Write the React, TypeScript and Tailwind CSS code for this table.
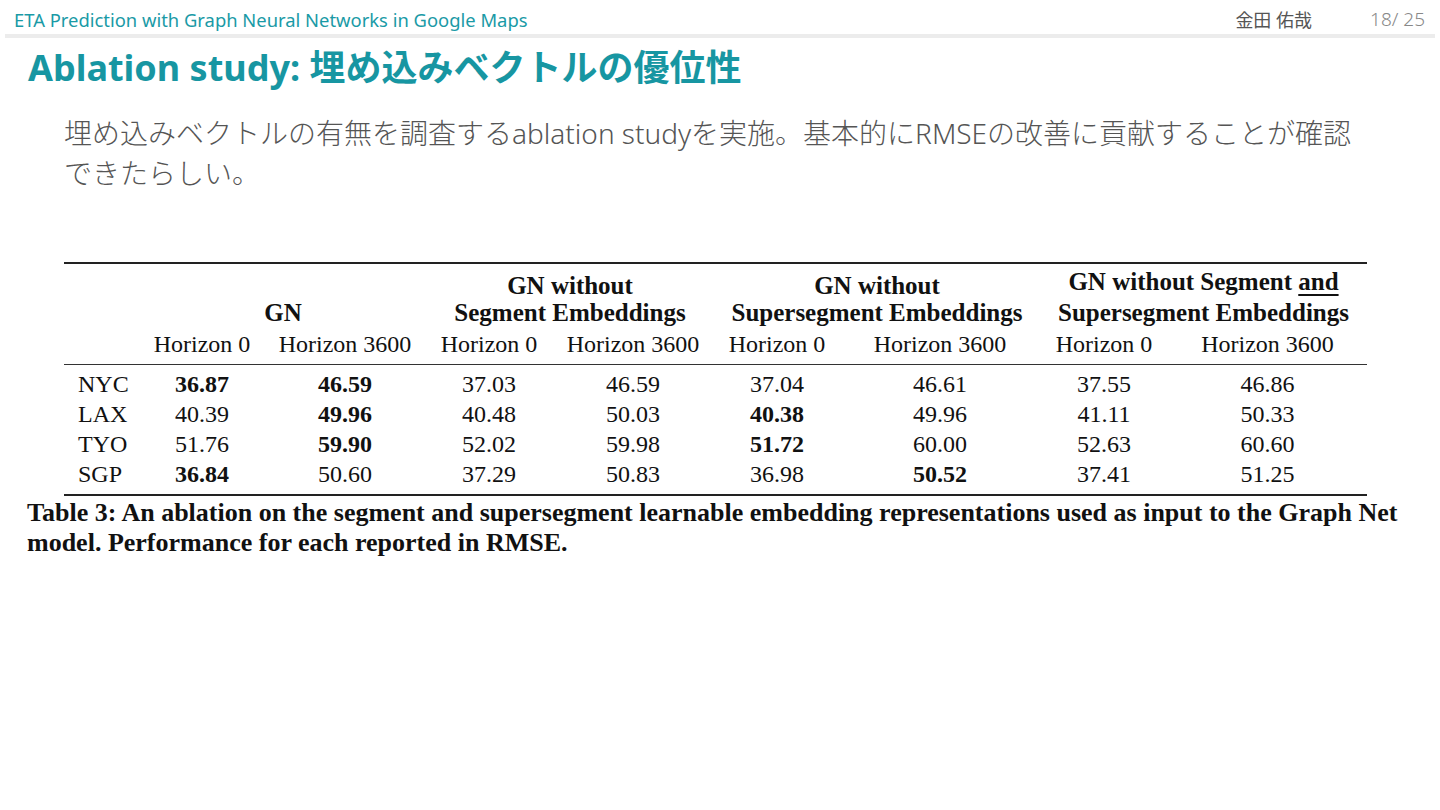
const groups = [
  { lines: ['GN'], span: 'col-span-2' },
  { lines: ['GN without', 'Segment Embeddings'], span: 'col-span-2' },
  { lines: ['GN without', 'Supersegment Embeddings'], span: 'col-span-2' },
  { lines: ['GN without Segment and', 'Supersegment Embeddings'], span: 'col-span-2', underline: true },
]

type Cell = { v: string; b?: boolean }
const rows: { city: string; cells: Cell[] }[] = [
  { city: 'NYC', cells: [{ v: '36.87', b: true }, { v: '46.59', b: true }, { v: '37.03' }, { v: '46.59' }, { v: '37.04' }, { v: '46.61' }, { v: '37.55' }, { v: '46.86' }] },
  { city: 'LAX', cells: [{ v: '40.39' }, { v: '49.96', b: true }, { v: '40.48' }, { v: '50.03' }, { v: '40.38', b: true }, { v: '49.96' }, { v: '41.11' }, { v: '50.33' }] },
  { city: 'TYO', cells: [{ v: '51.76' }, { v: '59.90', b: true }, { v: '52.02' }, { v: '59.98' }, { v: '51.72', b: true }, { v: '60.00' }, { v: '52.63' }, { v: '60.60' }] },
  { city: 'SGP', cells: [{ v: '36.84', b: true }, { v: '50.60' }, { v: '37.29' }, { v: '50.83' }, { v: '36.98' }, { v: '50.52', b: true }, { v: '37.41' }, { v: '51.25' }] },
]

const cols = 'grid grid-cols-[76px_124px_162px_126px_162px_126px_200px_128px_199px]'

export default function App() {
  return (
    <div className="w-[1440px] h-[810px] bg-white overflow-hidden font-['Noto_Sans','Noto_Sans_CJK_JP',sans-serif]">
      {/* top bar */}
      <div className="flex items-end h-[34px] pl-[14px] pr-[15px] pb-[5px]">
        <div className="text-[18.4px] text-[#1a9aa6] leading-none">ETA Prediction with Graph Neural Networks in Google Maps</div>
        <div className="ml-auto text-[18px] text-[#555] leading-none">金田 佑哉</div>
        <div className="ml-[58px] text-[19px] font-light text-[#888] leading-none">18/ 25</div>
      </div>
      <div className="mx-[5px] h-[4px] bg-[#ececec]" />

      <h1 className="pl-[28px] mt-[8px] text-[36px] font-bold leading-[44px] text-[#1796a2]">Ablation study: 埋め込みベクトルの優位性</h1>

      <p className="pl-[64px] pr-[70px] mt-[23px] text-[28px] leading-[40px] font-light text-[#555]">
        埋め込みベクトルの有無を調査するablation studyを実施。基本的にRMSEの改善に貢献することが確認できたらしい。
      </p>

      {/* table */}
      <div className="mt-[69px] font-['Liberation_Serif',serif] text-[#111]">
        <div className="ml-[64px] w-[1303px]">
          <div className="border-t-[2px] border-[#222]" />
          <div className={`${cols} items-end`}>
            <div />
            {groups.map((g, i) => (
              <div key={i} className={`${g.span} text-center font-bold text-[25px] leading-[27px]`}>
                {g.lines.map((l, j) => (
                  <div key={j} className={g.underline && j === 0 ? 'leading-[35px]' : ''}>
                    {g.underline && j === 0 ? (
                      <>GN without Segment <span className="underline underline-offset-[4px]">and</span></>
                    ) : l}
                  </div>
                ))}
              </div>
            ))}
          </div>
          <div className={`${cols} text-[24px] leading-[30px] mt-[3px] pb-[5px]`}>
            <div />
            {['Horizon 0', 'Horizon 3600', 'Horizon 0', 'Horizon 3600', 'Horizon 0', 'Horizon 3600', 'Horizon 0', 'Horizon 3600'].map((h, i) => (
              <div key={i} className="text-center">{h}</div>
            ))}
          </div>
          <div className="border-t-[1.5px] border-[#333]" />
          <div className="pt-[4px] pb-[5px]">
            {rows.map(r => (
              <div key={r.city} className={`${cols} text-[24px] leading-[30px]`}>
                <div className="pl-[14px]">{r.city}</div>
                {r.cells.map((c, i) => (
                  <div key={i} className={`text-center ${c.b ? 'font-bold' : ''}`}>{c.v}</div>
                ))}
              </div>
            ))}
          </div>
          <div className="border-t-[2px] border-[#222]" />
        </div>
        <p className="pl-[27px] pr-[20px] mt-[2px] font-bold text-[26px] leading-[30px] text-[#111]">
          Table 3: An ablation on the segment and supersegment learnable embedding representations used as input to the Graph Net model. Performance for each reported in RMSE.
        </p>
      </div>
    </div>
  )
}
